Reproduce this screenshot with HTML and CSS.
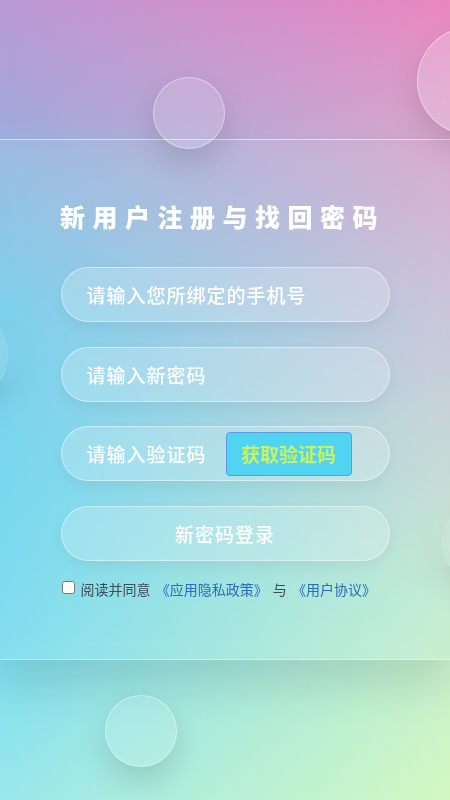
FILE: index.html
```html
<!DOCTYPE html>
<html lang="zh-CN">

<head>
    <title>新用户注册与找回密码</title>
    <meta charset="utf-8">
    <meta name="viewport" content="width=device-width, initial-scale=1.0">
    <link rel="stylesheet" href="styles.css">
</head>

<body>
    <div class="app">
        <div class="bg-right"></div>

        <!-- bobler bag og foran glaspanelet -->
        <span class="qiu q1"></span>
        <span class="qiu q2"></span>
        <span class="qiu q3"></span>
        <span class="qiu q4"></span>
        <span class="qiu q5"></span>

        <section class="boks">
            <h1>新用户注册与找回密码</h1>

            <div class="felt">
                <input type="text" placeholder="请输入您所绑定的手机号">
            </div>
            <div class="felt">
                <input type="password" placeholder="请输入新密码">
            </div>
            <div class="felt">
                <input type="text" placeholder="请输入验证码">
                <button class="kode">获取验证码</button>
            </div>
            <button class="felt logind">新密码登录</button>

            <label class="aftale">
                <input type="checkbox">
                <span>阅读并同意 <a href="#">《应用隐私政策》</a> 与 <a href="#">《用户协议》</a></span>
            </label>
        </section>
    </div>
</body>

</html>
```

FILE: styles.css
```css
* {
    box-sizing: border-box;
}

html,
body {
    margin: 0;
}

.app {
    position: relative;
    width: 450px;
    height: 800px;
    overflow: hidden;
    padding-top: 139px;
    font-family: "Noto Sans CJK SC", "Microsoft YaHei", sans-serif;
    background: linear-gradient(to bottom, #bc9ad6 0%, #a2a8da 15%, #94bce2 20%, #78ceec 38%, #70d6f0 60%, #7adcf0 78%, #9ae8ec 100%);
}

.bg-right {
    position: absolute;
    top: 0;
    left: 0;
    width: 100%;
    height: 100%;
    background: linear-gradient(to bottom, #ea86c0 0%, #d8a6cc 17%, #c8c4d8 40%, #c2ecd0 75%, #d4f8c0 100%);
    -webkit-mask-image: linear-gradient(to right, transparent, #000);
    mask-image: linear-gradient(to right, transparent, #000);
}

.qiu {
    position: absolute;
    border-radius: 50%;
    background: rgba(255, 255, 255, 0.14);
    border: 1px solid rgba(255, 255, 255, 0.4);
    box-shadow: 0 15px 30px rgba(0, 0, 0, 0.12);
}

.q1 {
    width: 72px;
    height: 72px;
    left: 153px;
    top: 77px;
    z-index: 3;
}

.q2 {
    width: 108px;
    height: 108px;
    left: 417px;
    top: 27px;
    z-index: 3;
    background: rgba(255, 255, 255, 0.2);
}

.q3 {
    width: 96px;
    height: 96px;
    left: -88px;
    top: 307px;
    z-index: 1;
}

.q4 {
    width: 80px;
    height: 80px;
    left: 442px;
    top: 503px;
    z-index: 1;
}

.q5 {
    width: 72px;
    height: 72px;
    left: 105px;
    top: 695px;
    z-index: 3;
}

.boks {
    position: relative;
    z-index: 2;
    height: 521px;
    padding-top: 60px;
    display: flex;
    flex-direction: column;
    align-items: center;
    background: rgba(255, 255, 255, 0.05);
    -webkit-backdrop-filter: blur(10px);
    backdrop-filter: blur(10px);
    border-top: 1px solid rgba(255, 255, 255, 0.55);
    border-bottom: 1px solid rgba(255, 255, 255, 0.4);
    box-shadow: 0 25px 40px rgba(0, 0, 0, 0.1);
}

h1 {
    margin: 0 5px 35px 0;
    font-size: 25px;
    line-height: 32px;
    font-weight: 900;
    letter-spacing: 7.5px;
    color: #fff;
}

.felt {
    width: 329px;
    height: 55px;
    margin-bottom: 24.5px;
    padding: 0 0 0 23px;
    display: flex;
    align-items: center;
    border-radius: 28px;
    background: rgba(255, 255, 255, 0.2);
    border: 1px solid rgba(255, 255, 255, 0.45);
    box-shadow: 0 6px 14px rgba(0, 0, 0, 0.05);
}

.felt input {
    flex: 1;
    min-width: 0;
    border: 0;
    outline: none;
    background: transparent;
    font: inherit;
    font-size: 19px;
    font-weight: 500;
    letter-spacing: 1px;
    color: #fff;
}

.felt input::placeholder {
    color: #fff;
}

.kode {
    flex: none;
    width: 126px;
    height: 44px;
    margin-right: 37px;
    padding: 0;
    font: inherit;
    font-size: 19px;
    font-weight: 700;
    color: #c8f262;
    background: #50d4f2;
    border: 1px solid #5a9ce0;
    border-radius: 4px;
}

.logind {
    justify-content: center;
    padding: 0;
    margin-bottom: 18px;
    font: inherit;
    font-size: 19px;
    font-weight: 500;
    letter-spacing: 1px;
    color: #fff;
}

.aftale {
    width: 329px;
    display: flex;
    align-items: center;
    font-size: 14px;
    line-height: 20px;
    word-spacing: 2px;
    color: #3d4b5a;
}

.aftale input {
    width: 13px;
    height: 13px;
    margin: 0 6px 2px 1px;
}

.aftale a {
    color: #2a6db5;
    text-decoration: none;
}
```
